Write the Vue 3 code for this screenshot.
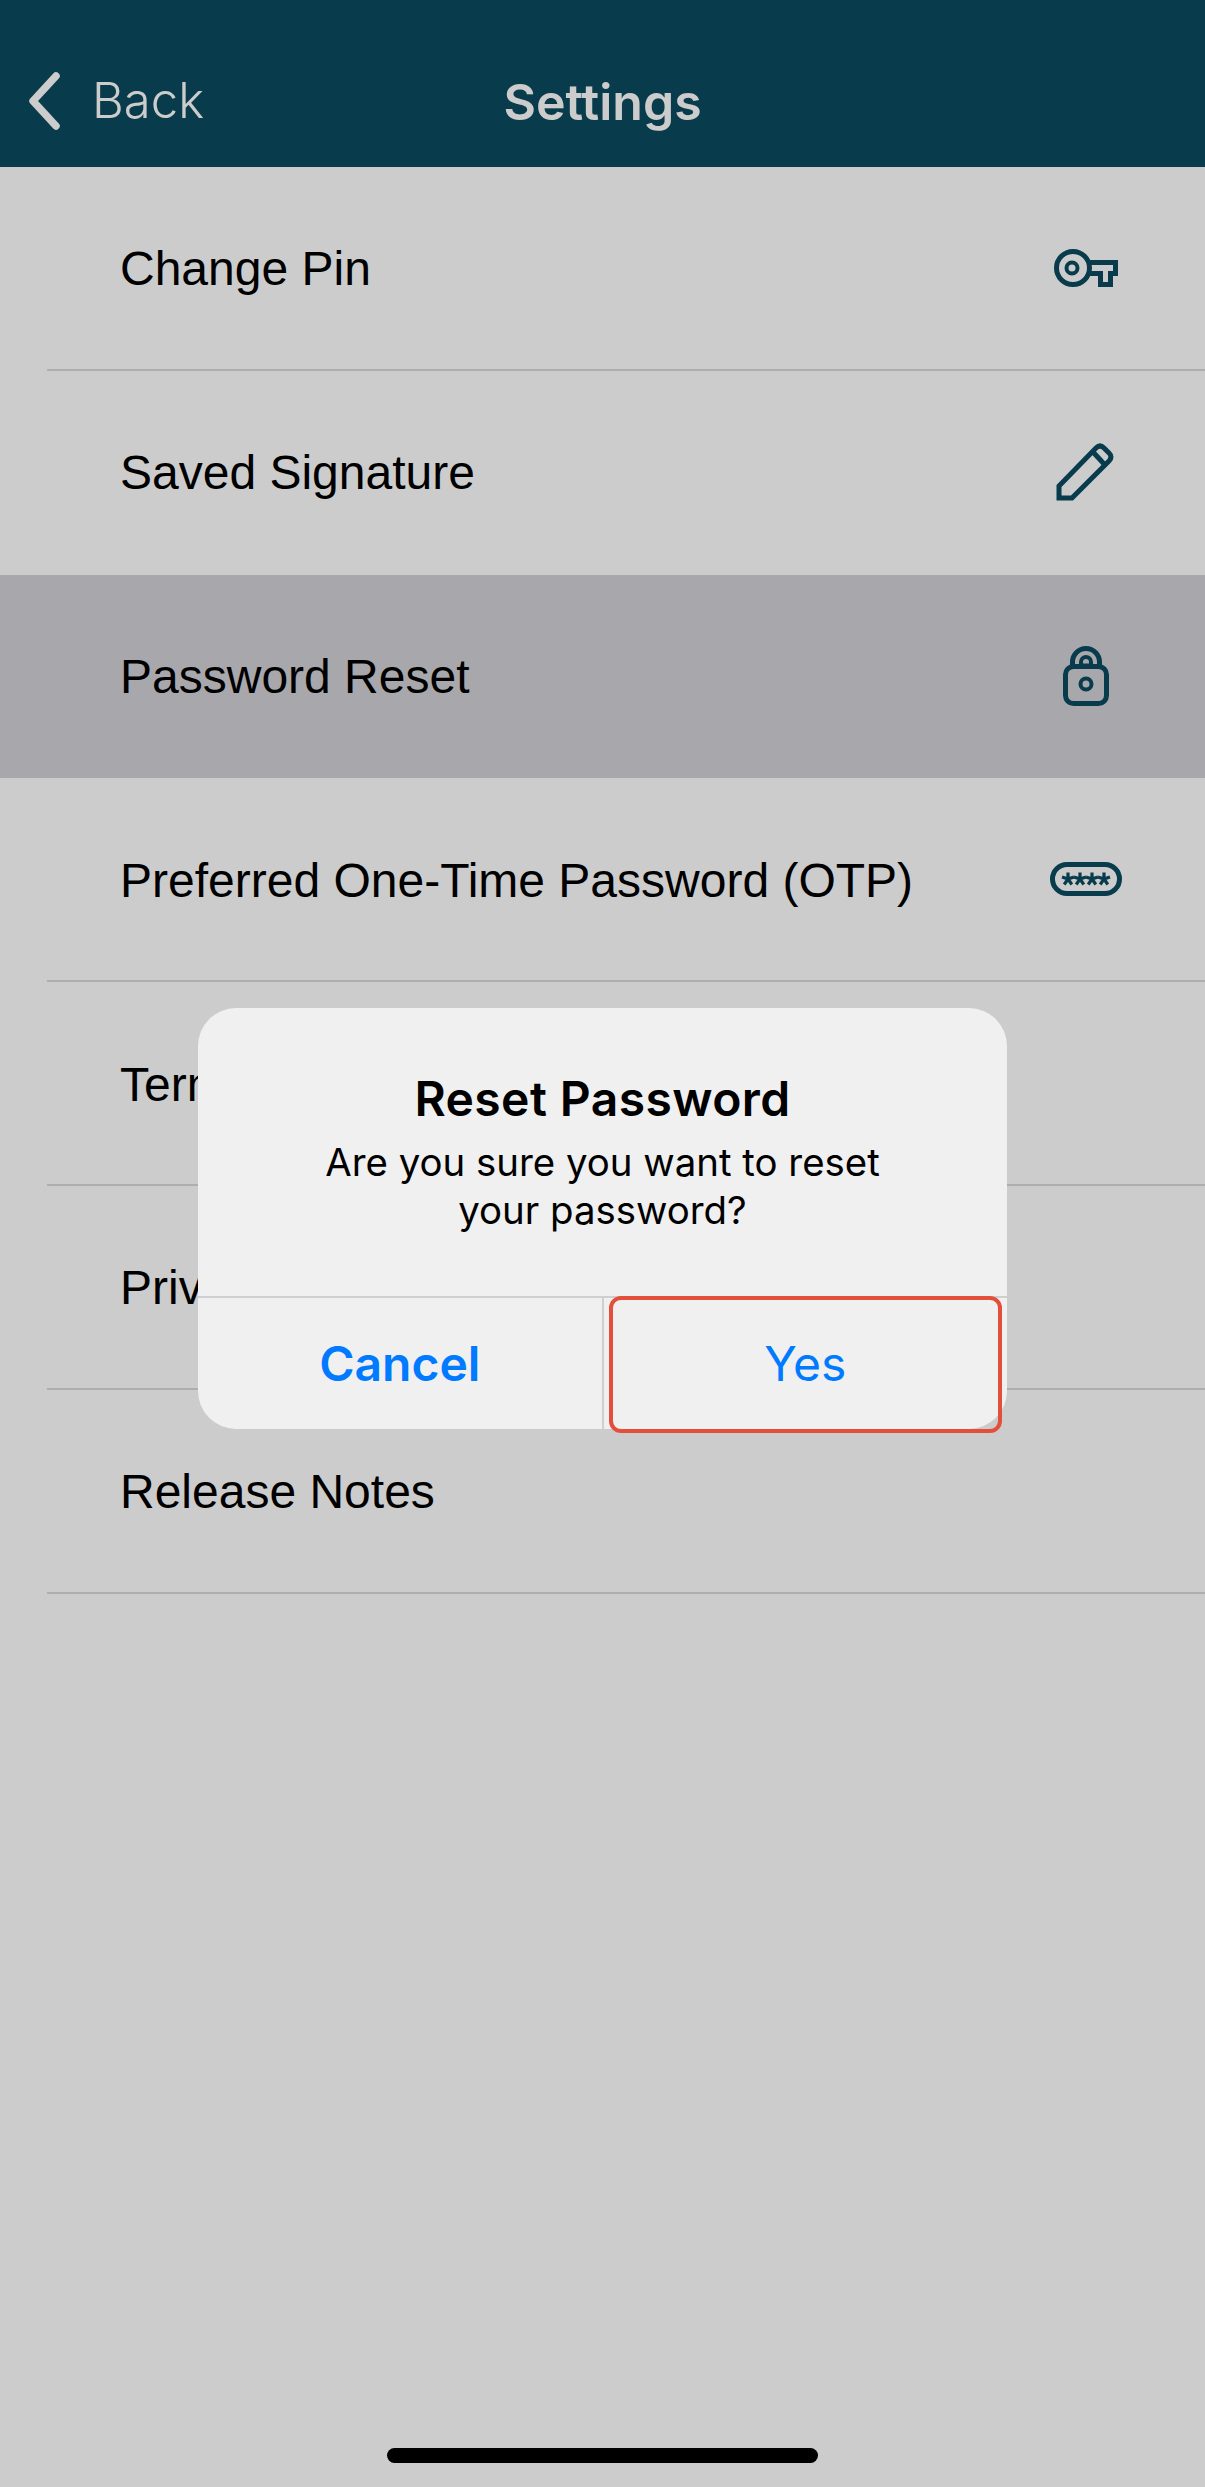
<script setup>
const rows = [
  { label: 'Change Pin', icon: 'key' },
  { label: 'Saved Signature', icon: 'pencil', noLine: true },
  { label: 'Password Reset', icon: 'lock', selected: true, noLine: true },
  { label: 'Preferred One-Time Password (OTP)', icon: 'otp' },
  { label: 'Terms and Conditions' },
  { label: 'Privacy Policy' },
  { label: 'Release Notes' },
]
</script>

<template>
  <div class="page">
    <header class="topbar">
      <div class="back">
        <svg class="chevron" width="40" height="60" viewBox="0 0 40 60">
          <path d="M32 5 L9 30 L32 55" />
        </svg>
        <span>Back</span>
      </div>
      <div class="title">Settings</div>
    </header>

    <div class="list">
      <div v-for="row in rows" :key="row.label" class="row" :class="{ selected: row.selected }">
        <div class="row-inner" :class="{ 'no-line': row.noLine }">
          <span class="label">{{ row.label }}</span>
          <svg v-if="row.icon" class="icon" width="80" height="80" viewBox="0 0 80 80">
            <template v-if="row.icon === 'key'">
              <circle cx="27" cy="40" r="16.5" />
              <circle cx="26" cy="40" r="5.5" stroke-width="4" />
              <path d="M43 34.5 H69.5 V45.5 H64.5 V56.5 H54.5 V45.5 H43" />
            </template>
            <template v-if="row.icon === 'pencil'">
              <path d="M13 66 V54 L50 16 Q54 12 58 16 L63 21 Q67 25 63 29 L26 66 Z" />
              <path d="M47 20 L59 33" />
            </template>
            <template v-if="row.icon === 'lock'">
              <rect x="19.5" y="31.5" width="41" height="37" rx="8" />
              <path d="M26.5 31 V27 a13.5 13.5 0 0 1 27 0 V31" />
              <path d="M35 30.5 V27 a5 5 0 0 1 10 0 V30.5 Z" stroke-width="4" />
              <circle cx="40" cy="49" r="5.5" stroke-width="4" />
            </template>
            <template v-if="row.icon === 'otp'">
              <rect x="6.5" y="25.5" width="67" height="29" rx="14.5" />
              <g v-for="x in [22, 34, 46, 58]" :key="x" stroke-width="3.2">
                <path :d="`M${x} 33.5 V40 M${x} 40 L${x + 6} 38 M${x} 40 L${x - 6} 38 M${x} 40 L${x + 3.8} 45.5 M${x} 40 L${x - 3.8} 45.5`" />
              </g>
            </template>
          </svg>
        </div>
      </div>
    </div>

    <div class="home-bar"></div>

    <div class="overlay">
      <div class="dialog">
        <div class="dialog-text">
          <div class="dialog-title">Reset Password</div>
          <div class="dialog-message">Are you sure you want to reset<br />your password?</div>
        </div>
        <div class="dialog-buttons">
          <div class="btn cancel">Cancel</div>
          <div class="btn yes">Yes</div>
        </div>
        <div class="highlight"></div>
      </div>
    </div>
  </div>
</template>

<style scoped>
.page {
  position: relative;
  width: 1205px;
  height: 2487px;
  background: #fff;
  overflow: hidden;
  font-family: "Liberation Sans", Arial, sans-serif;
}
.topbar {
  position: relative;
  height: 167px;
  background: #0a4b5f;
  color: #fff;
  display: flex;
  align-items: center;
  justify-content: center;
  padding-top: 36px;
  box-sizing: border-box;
  font-family: Inter, sans-serif;
}
.back {
  position: absolute;
  left: 24px;
  top: 71px;
  display: flex;
  align-items: center;
  gap: 28px;
  font-size: 49px;
  font-weight: 300;
  line-height: 60px;
}
.chevron {
  fill: none;
  stroke: #fff;
  stroke-width: 7.5;
  stroke-linecap: round;
  stroke-linejoin: round;
}
.title {
  font-size: 50px;
  font-weight: 600;
  line-height: 60px;
}
.row {
  height: 203.8px;
  padding-left: 47px;
  box-sizing: border-box;
}
.row.selected {
  background: #d3d2d8;
}
.row-inner {
  height: 100%;
  box-sizing: border-box;
  padding: 0 79px 0 73px;
  display: flex;
  align-items: center;
  justify-content: space-between;
  border-bottom: 2px solid #dadada;
}
.row-inner.no-line {
  border-bottom-color: transparent;
}
.label {
  font-size: 48px;
  color: #000;
  padding-top: 2px;
}
.icon {
  fill: none;
  stroke: #0a4b5f;
  stroke-width: 5;
}
.home-bar {
  position: absolute;
  left: 387px;
  top: 2448px;
  width: 431px;
  height: 15px;
  border-radius: 8px;
  background: #000;
}
.overlay {
  position: absolute;
  inset: 0;
  background: rgba(0, 0, 0, 0.2);
  display: flex;
  justify-content: center;
  align-items: flex-start;
  padding-top: 1008px;
  box-sizing: border-box;
}
.dialog {
  position: relative;
  width: 809px;
  height: 421px;
  background: #f0f0f0;
  border-radius: 38px;
  display: flex;
  flex-direction: column;
  font-family: Inter, sans-serif;
  color: #000;
}
.dialog-text {
  height: 288px;
  padding-top: 63px;
  box-sizing: border-box;
  text-align: center;
}
.dialog-title {
  font-size: 48px;
  font-weight: 600;
  letter-spacing: 0.4px;
  line-height: 56px;
}
.dialog-message {
  margin-top: 11px;
  font-size: 38.4px;
  line-height: 48px;
}
.dialog-buttons {
  flex: 1;
  display: flex;
  border-top: 2px solid #cfcfcf;
}
.btn {
  flex: 1;
  display: flex;
  align-items: center;
  justify-content: center;
  font-size: 48px;
  color: #007aff;
}
.cancel {
  font-weight: 600;
  border-right: 2px solid #cfcfcf;
}
.highlight {
  position: absolute;
  left: 411px;
  top: 288px;
  width: 393px;
  height: 137px;
  box-sizing: border-box;
  border: 4px solid #e34f3b;
  border-radius: 12px;
}
</style>
